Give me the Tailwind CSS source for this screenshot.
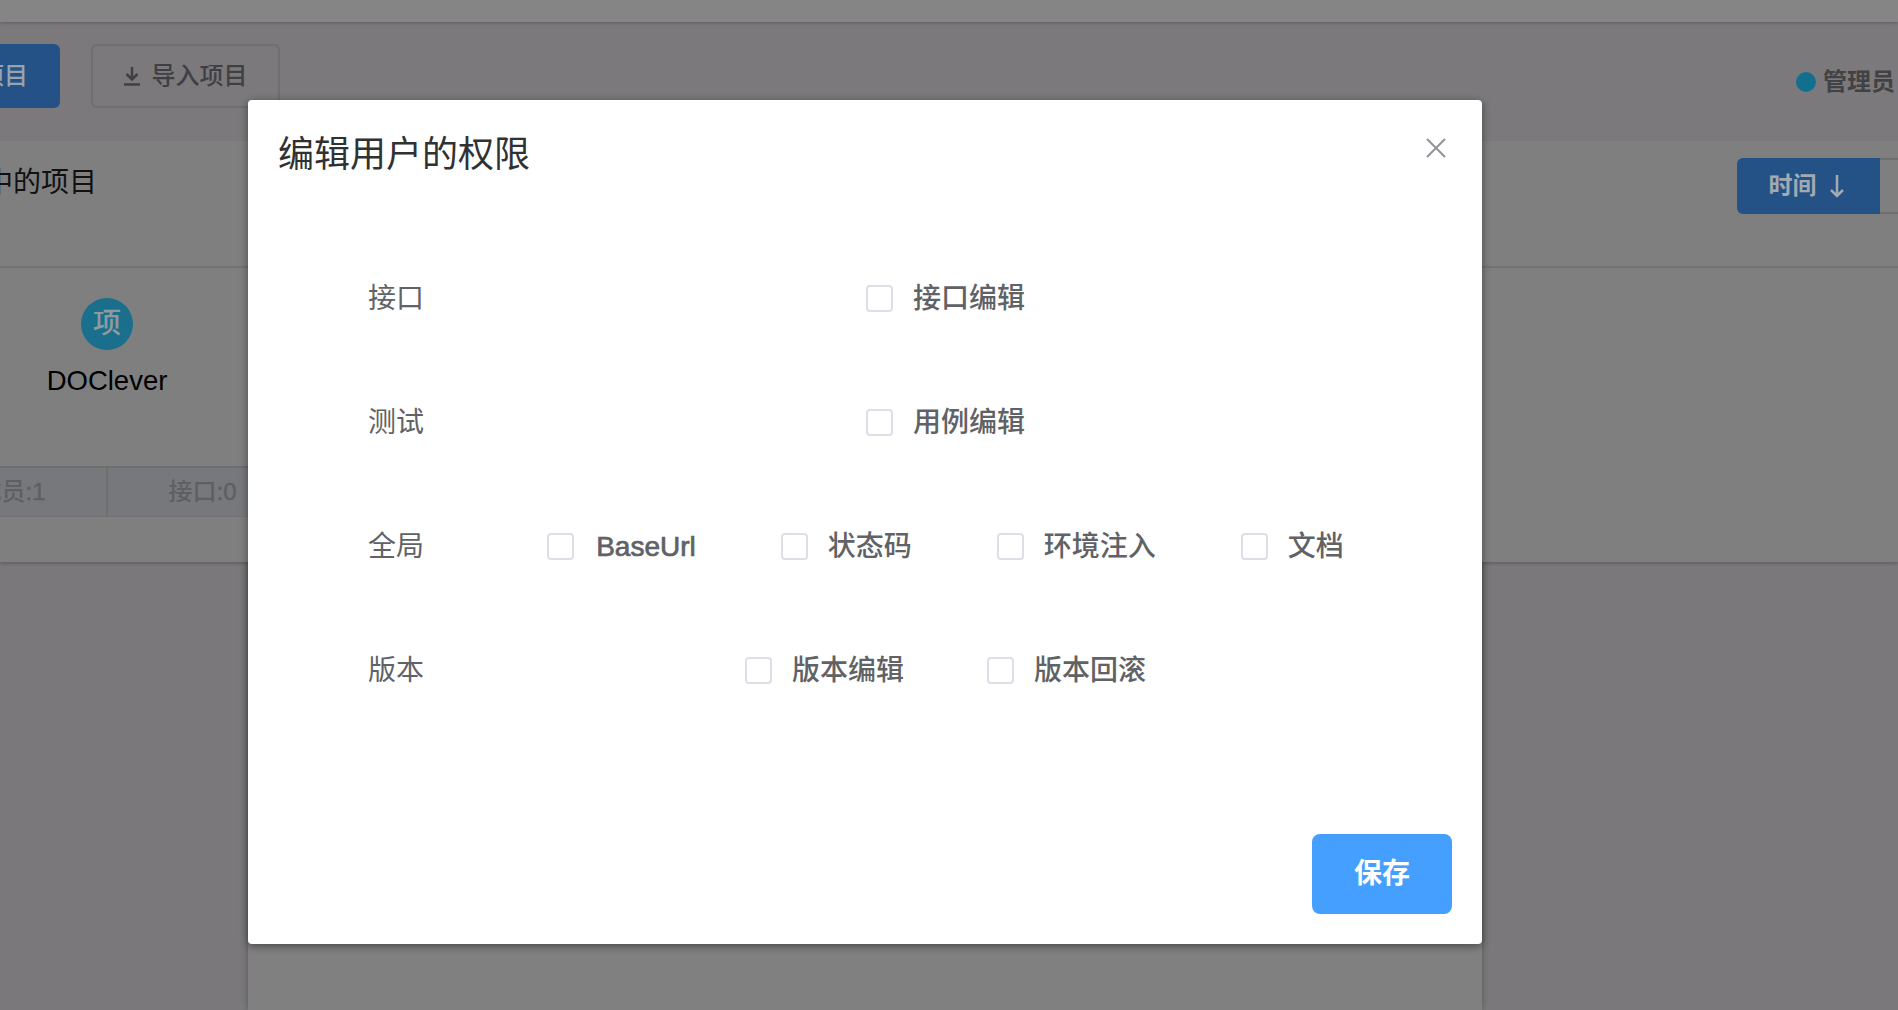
<!DOCTYPE html>
<html lang="zh-CN">
<head>
    <meta charset="UTF-8">
    <title>编辑用户的权限</title>
    <script src="https://cdn.jsdelivr.net/npm/@tailwindcss/browser@4"></script>
</head>
<body class="bg-[#7a787b] font-['Liberation_Sans','Noto_Sans_CJK_SC',sans-serif]">
    <div class="relative w-[1898px] h-[1010px] overflow-hidden flex flex-col">
        <!-- Top bar -->
        <div class="h-[22px] shrink-0 bg-[#858585] shadow-[0_1px_3px_rgba(0,0,0,0.25)] z-10"></div>

        <!-- Toolbar -->
        <div class="h-[119px] shrink-0 bg-[#7b797c] flex items-start pt-[22px]">
            <button class="ml-[-128px] w-[188px] h-[64px] rounded-[6px] bg-[#245287] text-[#9aa3ad] text-[24px] font-medium flex items-center justify-center gap-[12px] shrink-0">
                <svg class="w-[16px] h-[19px]" viewBox="0 0 16 19" fill="none" stroke="currentColor" stroke-width="2.5"><path d="M8 0v12M2.5 7l5.5 5.5L13.500 7M0 17.500h16"/></svg>
                新建项目
            </button>
            <button class="ml-[31px] w-[189px] h-[64px] rounded-[6px] border-2 border-[#6f6e70] text-[#404043] text-[24px] font-medium flex items-center justify-center gap-[12px] shrink-0">
                <svg class="w-[16px] h-[19px]" viewBox="0 0 16 19" fill="none" stroke="currentColor" stroke-width="2.5"><path d="M8 0v12M2.5 7l5.5 5.5L13.500 7M0 17.500h16"/></svg>
                导入项目
            </button>
            <div class="ml-auto mt-[20px] flex items-center gap-[7px] mr-[3px] text-[24px] leading-[36px] font-bold text-[#424244]">
                <span class="w-[20px] h-[20px] rounded-full bg-[#136f8e]"></span>
                <span>管理员</span>
            </div>
        </div>

        <!-- Project card -->
        <div class="h-[421px] shrink-0 bg-[#7f7f7f] shadow-[0_2px_3px_rgba(0,0,0,0.2)] z-[1]">
            <div class="h-[127px] border-b-2 border-[#737373] flex items-start justify-between">
                <div class="ml-[-71px] mt-[22px] text-[28px] leading-[40px] text-[#111]">进行中的项目</div>
                <div class="flex mt-[17px] mr-[-42px]">
                    <button class="w-[143px] h-[56px] rounded-l-[6px] bg-[#245287] text-[#a3a9b0] text-[24px] font-bold flex items-center justify-center gap-[13px] pr-[5px]">
                        时间
                        <svg class="w-[14px] h-[24px]" viewBox="0 0 14 24" fill="none" stroke="currentColor" stroke-width="2.5"><path d="M7 1v21M1 16l6 6 6-6"/></svg>
                    </button>
                    <div class="w-[60px] h-[56px] border-y-2 border-[#6f6e70]"></div>
                </div>
            </div>
            <div class="ml-[-83px] w-[380px]">
                <div class="h-[198px] pt-[30px] flex flex-col items-center">
                    <div class="w-[52px] h-[52px] rounded-full bg-[#1a6f8c] text-[#8f9a9f] text-[28px] font-medium flex items-center justify-center">项</div>
                    <div class="mt-[13px] text-[27.5px] leading-[36px] text-black">DOClever</div>
                </div>
                <div class="h-[51px] flex bg-[#77787b] border-t-2 border-b border-t-[#6e6e6e] border-b-[#737373] text-[24px] font-medium text-[#5f5f62]">
                    <div class="flex-1 flex items-center justify-center border-r-2 border-[#6e6e6e]">成员<span class="[-webkit-text-stroke:0.5px]">:1</span></div>
                    <div class="flex-1 flex items-center justify-center">接口<span class="[-webkit-text-stroke:0.5px]">:0</span></div>
                </div>
            </div>
        </div>

        <!-- Card behind the dialog -->
        <div class="flex-1 ml-[248px] w-[1234px] bg-[#808080] shadow-[0_0_6px_rgba(0,0,0,0.3)]"></div>

        <!-- Dialog -->
        <div class="absolute top-[100px] left-[248px] w-[1234px] h-[844px] z-20 bg-white rounded-[4px] shadow-[0_2px_8px_rgba(0,0,0,0.45)] flex flex-col">
            <div class="h-[110px] shrink-0 flex items-center justify-between pl-[30px] pr-[36px]">
                <span class="text-[36px] text-[#303133]">编辑用户的权限</span>
                <svg class="w-[20px] h-[20px] mt-[-14px]" viewBox="0 0 20 20" fill="none" stroke="#909399" stroke-width="2"><path d="M1 1l18 18M19 1L1 19"/></svg>
            </div>
            <div class="mt-[27px] px-[120px] text-[28px] text-[#606266]">
                <div class="h-[124px] flex items-center">
                    <div class="w-[161px] shrink-0">接口</div>
                    <div class="flex-1 flex justify-center gap-[84px] font-medium">
                        <label class="flex items-center gap-[20px]"><span class="w-[27px] h-[27px] mt-[-2px] rounded-[4px] border-2 border-[#dcdfe6]"></span>接口编辑</label>
                    </div>
                </div>
                <div class="h-[124px] flex items-center">
                    <div class="w-[161px] shrink-0">测试</div>
                    <div class="flex-1 flex justify-center gap-[84px] font-medium">
                        <label class="flex items-center gap-[20px]"><span class="w-[27px] h-[27px] mt-[-2px] rounded-[4px] border-2 border-[#dcdfe6]"></span>用例编辑</label>
                    </div>
                </div>
                <div class="h-[124px] flex items-center">
                    <div class="w-[161px] shrink-0">全局</div>
                    <div class="flex-1 flex justify-center gap-[85px] font-medium">
                        <label class="flex items-center gap-[22px]"><span class="w-[27px] h-[27px] mt-[-2px] rounded-[4px] border-2 border-[#dcdfe6]"></span><span class="[-webkit-text-stroke:0.7px]">BaseUrl</span></label>
                        <label class="flex items-center gap-[20px]"><span class="w-[27px] h-[27px] mt-[-2px] rounded-[4px] border-2 border-[#dcdfe6]"></span>状态码</label>
                        <label class="flex items-center gap-[20px]"><span class="w-[27px] h-[27px] mt-[-2px] rounded-[4px] border-2 border-[#dcdfe6]"></span>环境注入</label>
                        <label class="flex items-center gap-[20px]"><span class="w-[27px] h-[27px] mt-[-2px] rounded-[4px] border-2 border-[#dcdfe6]"></span>文档</label>
                    </div>
                </div>
                <div class="h-[124px] flex items-center">
                    <div class="w-[161px] shrink-0">版本</div>
                    <div class="flex-1 flex justify-center gap-[83px] font-medium">
                        <label class="flex items-center gap-[20px]"><span class="w-[27px] h-[27px] mt-[-2px] rounded-[4px] border-2 border-[#dcdfe6]"></span>版本编辑</label>
                        <label class="flex items-center gap-[20px]"><span class="w-[27px] h-[27px] mt-[-2px] rounded-[4px] border-2 border-[#dcdfe6]"></span>版本回滚</label>
                    </div>
                </div>
            </div>
            <button class="mt-auto mb-[30px] mr-[30px] self-end w-[140px] h-[80px] rounded-[8px] bg-[#459fff] text-white text-[28px] font-bold">保存</button>
        </div>
    </div>
</body>
</html>
